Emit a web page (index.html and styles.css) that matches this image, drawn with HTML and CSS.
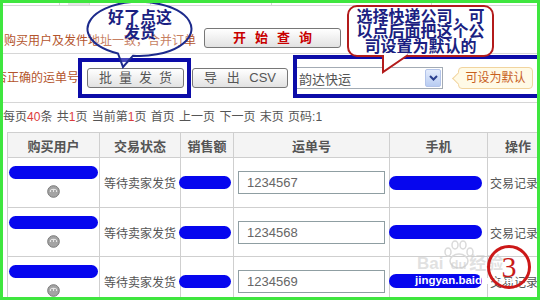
FILE: index.html
```html
<!DOCTYPE html>
<html lang="zh-CN">
<head>
    <meta charset="UTF-8">
    <meta name="viewport" content="width=device-width, initial-scale=1.0">
    <title>批量发货</title>
    <link rel="stylesheet" href="styles.css">
</head>
<body>
    <div class="frame">
        <div class="strip"><span class="s1"></span><span class="s2"></span><span class="s3"></span><span class="s4"></span><span class="s5"></span></div>

        <div class="row row-merge">
            <span class="hint hint-merge">购买用户及发件地址一致，合并订单</span>
            <button class="btn btn-query">开始查询</button>
        </div>

        <div class="row row-ship">
            <span class="hint hint-check">否正确的运单号</span>
            <button class="btn btn-ship">批量发货</button>
            <button class="btn btn-csv">导 出 CSV</button>
            <div class="express">
                <span>韵达快运</span>
                <span class="express-arrow"><svg width="9" height="6" viewBox="0 0 9 6"><path d="M1 1 L4.5 4.5 L8 1" fill="none" stroke="#2b3f8e" stroke-width="2"/></svg></span>
            </div>
            <span class="tip">可设为默认</span>
        </div>

        <div class="pager">每页<em>40</em>条 共<em>1</em>页 当前第<em>1</em>页 首页 上一页 下一页 末页 页码:1</div>

        <div class="orders">
            <div class="th">购买用户</div>
            <div class="th">交易状态</div>
            <div class="th">销售额</div>
            <div class="th">运单号</div>
            <div class="th">手机</div>
            <div class="th">操作</div>

            <div class="c-user"><span class="blob blob-user"></span><svg class="face" width="13" height="13" viewBox="0 0 13 13"><circle cx="6.5" cy="6.5" r="5.8" fill="#a4a4a4" stroke="#777"/><path d="M2.8 7 A3.7 3.2 0 0 1 10.2 7 Z" fill="#e6e6e6"/><circle cx="5" cy="6" r=".8" fill="#555"/><circle cx="8" cy="6" r=".8" fill="#555"/></svg></div>
            <div class="c-status">等待卖家发货</div>
            <div class="c-amt"><span class="blob blob-amt"></span></div>
            <div class="c-no"><input class="waybill" type="text" value="1234567"></div>
            <div class="c-phone"><span class="blob blob-phone"></span></div>
            <div class="c-op">交易记录</div>

            <div class="c-user"><span class="blob blob-user"></span><svg class="face" width="13" height="13" viewBox="0 0 13 13"><circle cx="6.5" cy="6.5" r="5.8" fill="#a4a4a4" stroke="#777"/><path d="M2.8 7 A3.7 3.2 0 0 1 10.2 7 Z" fill="#e6e6e6"/><circle cx="5" cy="6" r=".8" fill="#555"/><circle cx="8" cy="6" r=".8" fill="#555"/></svg></div>
            <div class="c-status">等待卖家发货</div>
            <div class="c-amt"><span class="blob blob-amt"></span></div>
            <div class="c-no"><input class="waybill" type="text" value="1234568"></div>
            <div class="c-phone"><span class="blob blob-phone"></span></div>
            <div class="c-op">交易记录</div>

            <div class="c-user"><span class="blob blob-user"></span><svg class="face" width="13" height="13" viewBox="0 0 13 13"><circle cx="6.5" cy="6.5" r="5.8" fill="#a4a4a4" stroke="#777"/><path d="M2.8 7 A3.7 3.2 0 0 1 10.2 7 Z" fill="#e6e6e6"/><circle cx="5" cy="6" r=".8" fill="#555"/><circle cx="8" cy="6" r=".8" fill="#555"/></svg></div>
            <div class="c-status">等待卖家发货</div>
            <div class="c-amt"><span class="blob blob-amt"></span></div>
            <div class="c-no"><input class="waybill" type="text" value="1234569"></div>
            <div class="c-phone"><span class="blob blob-phone"></span></div>
            <div class="c-op">交易记录</div>
        </div>

        <!-- annotations drawn over the page -->
        <div class="mark mark-ship"></div>
        <div class="mark mark-express"></div>

        <svg class="bubble-shape" width="115" height="70" viewBox="0 0 115 70"><path d="M48 55.7 A52 27 0 1 0 33 53.5 L38 67 Z" fill="rgba(255,255,255,0.25)" stroke="#1c2a8c" stroke-width="2"/></svg>
        <div class="bubble-text">好了点这<br>发货</div>

        <div class="note">选择快递公司，可<br>以点后面把这个公<br>司设置为默认的</div>
        <svg class="note-tail" width="32" height="26" viewBox="0 0 32 26"><polygon points="4,0 27,0 27,3 4,20" fill="#fff"/><path d="M3 2 L3 19 L28 2" fill="none" stroke="#b31b1b" stroke-width="2"/></svg>

        <svg class="wm-paw" width="32" height="30" viewBox="0 0 32 30"><g fill="none" stroke="#dadada" stroke-width="1.5"><ellipse cx="16" cy="21" rx="9" ry="7"/><ellipse cx="5" cy="12" rx="3" ry="4"/><ellipse cx="12" cy="5" rx="3" ry="4"/><ellipse cx="20" cy="5" rx="3" ry="4"/><ellipse cx="27" cy="12" rx="3" ry="4"/></g></svg>
        <div class="wm-text">Bai<span class="wm-du">du</span>经验</div>
        <div class="wm-site">jingyan.baidu.com</div>
        <div class="stamp">3</div>
    </div>
</body>
</html>
```

FILE: styles.css
```css
* { box-sizing: border-box; margin: 0; padding: 0; }
body { width: 540px; height: 300px; overflow: hidden; background: #fff; font-family: "Liberation Sans", "Noto Sans CJK SC", sans-serif; font-size: 12px; color: #555; }
.frame { position: relative; width: 540px; height: 300px; border: 3px solid #3fe63f; overflow: hidden; background: #fff; }

.strip { display: flex; height: 3px; border-bottom: 1px solid #d6d6d6; }
.strip span { height: 2px; border-right: 1px solid #d6d6d6; }
.s1 { width: 57px; }
.s2 { width: 22px; margin-left: 8px; background: #e6e6e6; }
.s3 { width: 61px; }
.s4 { width: 121px; }
.s5 { width: 160px; }

.row { display: flex; border-bottom: 1px solid #d6d6d6; }
.row-merge { height: 48px; align-items: flex-end; padding: 0 0 5px 1px; }
.row-ship { height: 49px; align-items: center; }

.hint { color: #b4542c; line-height: 16px; white-space: nowrap; }
.hint-merge { width: 200px; margin-bottom: -1px; }
.hint-check { width: 92px; margin-left: -8px; }

.btn { height: 20px; border: 1px solid #777; border-radius: 3px; background: linear-gradient(#fff, #e2e2e2); font-family: "Liberation Sans", "Noto Sans CJK SC", sans-serif; font-size: 13px; color: #555; line-height: 18px; }
.btn-query { width: 137px; color: #c80000; font-weight: bold; letter-spacing: 9px; padding-left: 9px; }
.btn-ship { width: 97px; letter-spacing: 7px; padding-left: 7px; }
.btn-csv { width: 96px; margin-left: 8px; word-spacing: 6px; }

.express { display: flex; align-items: center; justify-content: space-between; width: 148px; height: 22px; margin-left: 7px; padding: 0 1px 0 3px; border: 1px solid #a3abb4; font-size: 13px; color: #555; }
.express-arrow { display: flex; align-items: center; justify-content: center; width: 16px; height: 18px; border: 1px solid #b3c4ea; border-radius: 2px; background: linear-gradient(#e4ecfc, #b8ccf2); }

.tip { position: relative; width: 75px; height: 22px; margin-left: 15px; line-height: 20px; text-align: center; background: #fffae6; border: 1px solid #f1d49e; border-radius: 4px; color: #c8601e; }
.tip::before { content: ""; position: absolute; left: -5px; top: 6px; width: 8px; height: 8px; background: #fffae6; border-left: 1px solid #f1d49e; border-bottom: 1px solid #f1d49e; transform: rotate(45deg); }

.pager { height: 29px; line-height: 29px; white-space: nowrap; word-spacing: 1px; color: #555; }
.pager em { font-style: normal; color: #dc3c3c; }

.orders { display: grid; grid-template-columns: 91px 80px 52px 155px 97px 60px; grid-template-rows: 24px 49px 48px 48px; gap: 1px; width: max-content; margin-left: 4px; background: #cfcfcf; border: 1px solid #cfcfcf; }
.orders > div { display: flex; align-items: center; background: #fff; white-space: nowrap; }
.orders > .th { justify-content: center; background: #f4f4f4; font-size: 13px; font-weight: bold; color: #555; }
.orders > .c-user { flex-direction: column; align-items: center; padding-top: 8px; }
.c-status { padding-left: 4px; }
.c-no { padding-left: 4px; }
.c-op { padding-left: 2px; }
.face { margin-top: 6px; }

.blob { display: block; background: #0606ee; border-radius: 7px; }
.blob-user { width: 89px; height: 13px; }
.blob-amt { width: 52px; height: 13px; margin-left: -2px; }
.blob-phone { width: 93px; height: 14px; margin-left: -1px; }

.waybill { width: 147px; height: 23px; padding-left: 8px; border: 1px solid #8f9ea2; font-family: "Liberation Sans", sans-serif; font-size: 13px; color: #666; outline: none; }

.mark { position: absolute; border: 4px solid #0c0ca8; }
.mark-ship { left: 75px; top: 55px; width: 113px; height: 40px; }
.mark-express { left: 290px; top: 52px; width: 260px; height: 43px; }

.bubble-shape { position: absolute; left: 82px; top: -3px; }
.bubble-text { position: absolute; left: 85px; top: 6px; width: 104px; text-align: center; font: bold 16px/15px "Noto Sans CJK SC", sans-serif; color: #1b1f82; }

.note { position: absolute; left: 344px; top: 2px; width: 147px; height: 52px; padding-top: 1px; border: 2px solid #b31b1b; border-radius: 10px; background: #fff; text-align: center; font: bold 16px/15px "Noto Sans CJK SC", sans-serif; color: #1b1f82; }
.note-tail { position: absolute; left: 377px; top: 50px; }

.wm-paw { position: absolute; left: 440px; top: 237px; }
.wm-text { position: absolute; left: 414px; top: 252px; font: bold 17px/18px "Liberation Sans", "Noto Sans CJK SC", sans-serif; color: rgba(200, 200, 200, 0.55); }
.wm-du { margin: 0 3px 0 7px; font-size: 13px; }
.wm-site { position: absolute; left: 412px; top: 270px; font: bold 11.5px/14px "Liberation Sans", sans-serif; color: #fff; }
.stamp { position: absolute; left: 484px; top: 242px; display: flex; align-items: center; justify-content: center; width: 44px; height: 44px; border: 3px solid #cc1818; border-radius: 50%; font: 30px/1 "Liberation Serif", serif; color: #c81a1a; }
```
